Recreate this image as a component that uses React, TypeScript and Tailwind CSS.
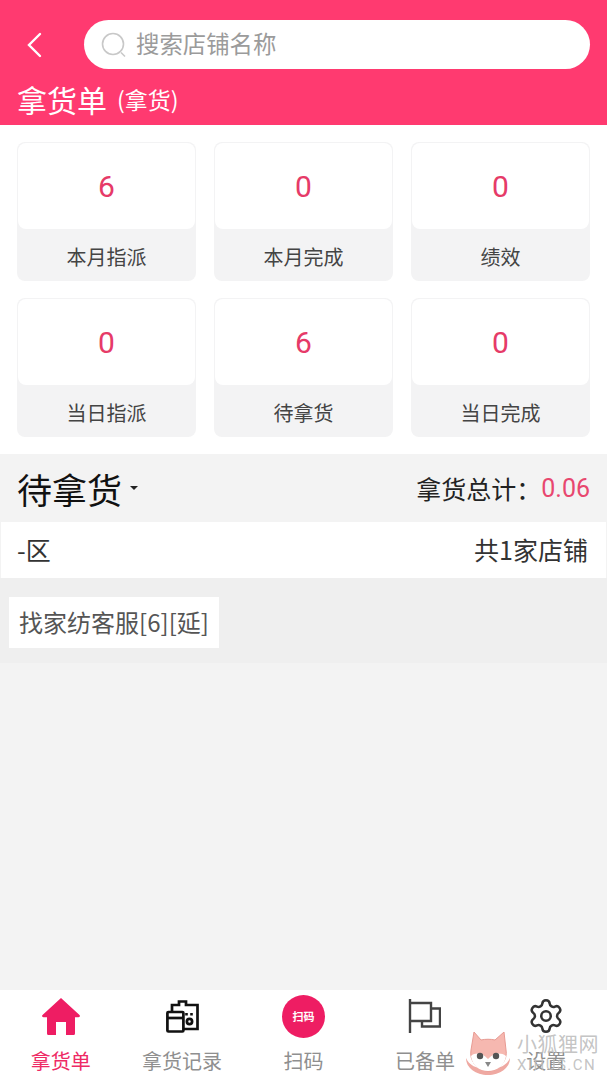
import { Settings } from 'lucide-react';

const font = "font-['Noto_Sans_CJK_SC','Noto_Sans',sans-serif]";

type StatCardProps = {
  value: string;
  label: string;
};

function StatCard({ value, label }: StatCardProps) {
  return (
    <div className="h-[139px] rounded-lg bg-[#f3f3f4] flex flex-col overflow-hidden">
      <div className="h-[86px] mx-px mt-px rounded-lg bg-white flex items-center justify-center">
        <span className="pt-px font-['Roboto',sans-serif] text-[30px] text-[#e63a68]">{value}</span>
      </div>
      <div className="flex-1 flex items-center justify-center pt-[3px] text-[20px] text-[#444]">{label}</div>
    </div>
  );
}

function HomeIcon() {
  return (
    <svg width="38" height="37" viewBox="0 0 38 37" fill="#ee1d63">
      <path d="M19 0 37.500 17c.9 1 .3 2.200-1 2.200H33V35.500a1.500 1.500 0 0 1-1.500 1.500H24V24H14v13H6.500A1.500 1.500 0 0 1 5 35.500V19.200H1.500c-1.300 0-1.900-1.200-1-2.200Z" />
    </svg>
  );
}

function RecordIcon() {
  return (
    <svg width="33" height="33" viewBox="0 0 33 33" fill="none" stroke="#111" strokeWidth="2.700">
      <path d="M6 12V5h7V1.500h7V5h11.500v24H17" />
      <rect x="1.400" y="12" width="16" height="19.500" rx="1" fill="#fff" />
      <path d="M1.400 18h16" />
      <circle cx="23.500" cy="21.500" r="2.600" />
      <path d="M20.500 13v2.500M25.500 13v2.500" strokeWidth="2.600" />
    </svg>
  );
}

function ScanIcon() {
  return (
    <div className="w-[43px] h-[43px] rounded-full bg-[#ee1d63] flex items-center justify-center">
      <span className="text-[11px] font-bold leading-none text-white">扫码</span>
    </div>
  );
}

function FlagIcon() {
  return (
    <svg width="33" height="34" viewBox="0 0 33 34" fill="none" stroke="#444" strokeWidth="2.400">
      <path d="M2 0v34" />
      <path d="M2 4h21v18H2" />
      <path d="M23 9.500h9v18H14V22" />
    </svg>
  );
}

function FoxMark() {
  return (
    <svg width="46" height="43" viewBox="0 0 46 43" className="shrink-0">
      <path d="M1 26c0 10 10 17 22 17s22-7 22-17c-3 7-10 11-22 11S4 33 1 26Z" fill="#efa9a2" />
      <path d="M9 0 16 8c4-1 10-1 14 0l9-8 2 18c2 10-7 21-18 21S4 28 6 18Z" fill="#f6b8b0" stroke="#e79a92" strokeWidth="1" />
      <path d="M6 24c5-4 11-3 17 3 6-6 12-7 18-3-1 9-9 15-18 15S7 33 6 24Z" fill="#fff" />
      <circle cx="15" cy="24" r="3.200" fill="#555" />
      <circle cx="31" cy="24" r="3.200" fill="#555" />
      <path d="M20 30h6l-3 5Z" fill="#888" />
    </svg>
  );
}

const navItems = [
  { label: '拿货单', icon: <HomeIcon />, active: true },
  { label: '拿货记录', icon: <RecordIcon /> },
  { label: '扫码', icon: <ScanIcon /> },
  { label: '已备单', icon: <FlagIcon /> },
  { label: '设置', icon: <Settings size={38} strokeWidth={1.6} className="text-[#333]" /> },
];

const stats = [
  { value: '6', label: '本月指派' },
  { value: '0', label: '本月完成' },
  { value: '0', label: '绩效' },
  { value: '0', label: '当日指派' },
  { value: '6', label: '待拿货' },
  { value: '0', label: '当日完成' },
];

export default function App() {
  return (
    <div className={`${font} relative w-[607px] h-[1080px] flex flex-col overflow-hidden bg-white`}>
      <header className="h-[125px] bg-[#ff3a70] flex flex-col">
        <div className="flex items-center pl-[26px] pr-[17px] pt-5">
          <svg width="16" height="26" viewBox="0 0 16 26" fill="none" stroke="#fff" strokeWidth="2.400" strokeLinecap="round">
            <path d="M14 2 3 13l11 11" />
          </svg>
          <div className="ml-[42px] flex-1 h-[49px] rounded-full bg-white flex items-center pl-[17px] gap-[9px]">
            <svg width="26" height="26" viewBox="0 0 26 26" fill="none" stroke="#c8c8c8" strokeWidth="1.600">
              <circle cx="12" cy="12" r="10.500" />
              <path d="M20 20.500 24 24.500" />
            </svg>
            <span className="pb-[2px] text-[23.400px] leading-none text-[#9b9b9b]">搜索店铺名称</span>
          </div>
        </div>
        <div className="flex items-center pl-[17px] mt-[9px] text-white">
          <span className="text-[30px] leading-[42px]">拿货单</span>
          <span className="ml-[10px] text-[23px] leading-[42px]">(拿货)</span>
        </div>
      </header>

      <section className="grid grid-cols-3 gap-x-[18px] gap-y-[17px] px-[17px] pt-[17px] pb-[17px]">
        {stats.map((stat) => (
          <StatCard key={stat.label} value={stat.value} label={stat.label} />
        ))}
      </section>

      <main className="flex-1 bg-[#f3f3f3] flex flex-col">
        <div className="h-[68px] flex items-center justify-between pl-[17px] pr-[17px]">
          <div className="flex items-center">
            <span className="text-[35px] leading-none text-[#111]">待拿货</span>
            <span className="ml-2 w-0 h-0 border-x-[4px] border-x-transparent border-t-[4px] border-t-[#222]" />
          </div>
          <div className="flex items-center text-[25px] leading-none text-[#222]">
            <span>拿货总计：</span>
            <span className="font-['Roboto',sans-serif] text-[#e8476f]">0.06</span>
          </div>
        </div>
        <div className="h-[56px] mx-px bg-white flex items-center justify-between pl-4 pr-[18px] text-[25px] text-[#333]">
          <span>-区</span>
          <span>共1家店铺</span>
        </div>
        <div className="h-[85px] bg-[#efefef] pl-[9px] pt-[19px]">
          <div className="w-[210px] h-[51px] pb-[2px] bg-white flex items-center justify-center text-[24px] text-[#555] whitespace-nowrap">
            找家纺客服[6][延]
          </div>
        </div>
      </main>

      <nav className="h-[90px] bg-white grid grid-cols-5">
        {navItems.map((item) => (
          <div key={item.label} className="flex flex-col items-center">
            <div className="h-[52px] flex items-center justify-center">{item.icon}</div>
            <span className={`mt-[5px] text-[20px] leading-[28px] ${item.active ? 'text-[#ee2a64]' : 'text-[#8f8f8f]'}`}>
              {item.label}
            </span>
          </div>
        ))}
      </nav>

      {/* watermark over the tab bar */}
      <div className="absolute left-[465px] top-[1032px] flex items-start gap-[6px] whitespace-nowrap">
        <FoxMark />
        <div className="flex flex-col text-[#bdbdbd]/90 leading-none">
          <span className="text-[20px] tracking-[0.5px] leading-[24px]">小狐狸网</span>
          <span className="font-['Roboto',sans-serif] text-[15px] leading-[18px] tracking-[1.500px]">XIHUS.CN</span>
        </div>
      </div>
    </div>
  );
}
